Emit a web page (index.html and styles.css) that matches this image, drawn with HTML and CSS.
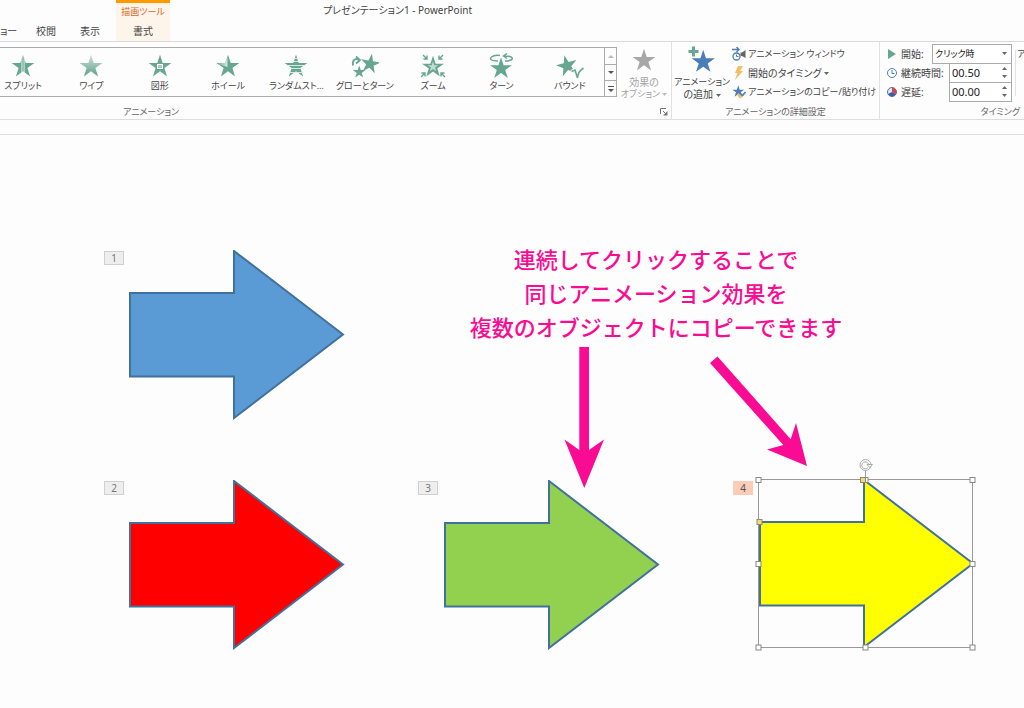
FILE: index.html
```html
<!DOCTYPE html>
<html lang="ja">
<head>
<meta charset="utf-8">
<title>プレゼンテーション1 - PowerPoint</title>
<link rel="stylesheet" href="styles.css">
</head>
<body>
<svg class="defs" aria-hidden="true">
  <defs>
    <polygon id="star" points="12,.7 14.7,9 23.4,9 16.4,14.1 19.1,22.4 12,17.3 4.9,22.4 7.6,14.1 .6,9 9.3,9"/>
    <polygon id="block-arrow" points="1,43 105,43 105,1 214,84.5 105,168 105,126.5 1,126.5"/>
    <linearGradient id="split"><stop offset=".2" stop-color="#67a690"/><stop offset=".4" stop-color="#67a690"/><stop offset=".41" stop-color="#c0dbd1"/><stop offset=".5" stop-color="#8dbcab"/><stop offset=".6" stop-color="#c0dbd1"/><stop offset=".61" stop-color="#67a690"/></linearGradient>
    <linearGradient id="wipe" x2="0" y2="1"><stop offset=".1" stop-color="#c4ddd4"/><stop offset=".9" stop-color="#67a690"/></linearGradient>
    <linearGradient id="wheel"><stop offset="0" stop-color="#67a690"/><stop offset="1" stop-color="#d5e8e1"/></linearGradient>
  </defs>
</svg>
<header class="titlebar">
  <nav class="tabs">
    <button class="tab tab-first">ョー</button>
    <button class="tab">校閲</button>
    <button class="tab">表示</button>
    <div class="context">
      <span class="context-name">描画ツール</span>
      <button class="tab">書式</button>
    </div>
  </nav>
  <h1 class="title">プレゼンテーション1 - PowerPoint</h1>
</header>

<div class="ribbon">
  <section class="group group-animation">
    <div class="group-body">
      <div class="gallery">
        <div class="effects">
          <button class="effect"><svg class="icon-l" viewBox="0 0 24 24"><use href="#star" fill="url(#split)"/></svg>スプリット</button>
          <button class="effect"><svg class="icon-l" viewBox="0 0 24 24"><use href="#star" fill="url(#wipe)"/></svg>ワイプ</button>
          <button class="effect"><svg class="icon-l" viewBox="0 0 24 24"><use href="#star"/><rect x="9.5" y="10.5" width="5" height="4" fill="#a9cdbf" stroke="#fff"/></svg>図形</button>
          <button class="effect"><svg class="icon-l" viewBox="0 0 24 24"><use href="#star"/><path d="M11.500 3V13L2.500 10.300.6 9H9.300Z" fill="url(#wheel)"/></svg>ホイール</button>
          <button class="effect"><svg class="icon-l" viewBox="0 0 24 24"><use href="#star"/><path d="M8 4.500h8M8 7.500h8M4 11.500h16M4 14.500h16M4 18.500h16" stroke="#e4f0ec" stroke-width=".9"/></svg>ランダムスト…</button>
          <button class="effect"><svg class="icon-xl" viewBox="0 0 28 26"><use href="#star" transform="translate(9 0) rotate(10 10 10) scale(.86)"/><use href="#star" transform="translate(1.500 12) scale(.56)"/><path d="M2 12.500C1 7 4 5 8 7M5 3.500L9 7.200 5 10.500" fill="none" stroke="#67a690" stroke-width="1.800"/></svg>グローとターン</button>
          <button class="effect"><svg class="icon-xl" viewBox="0 0 28 26"><use href="#star" transform="translate(2.500 2) scale(.96)"/><use href="#star" transform="translate(8.500 8) scale(.46)" fill="#c4ddd4"/><path d="M4 2l4 4M8 2.500V6H4.500M24 2l-4 4M20 2.500V6h3.500M2 24l4-4M2.500 20H6v3.500M26 24l-4-4M25.500 20H22v3.500" fill="none" stroke="#67a690" stroke-width="1.400"/></svg>ズーム</button>
          <button class="effect"><svg class="icon-xl" viewBox="0 0 28 26"><use href="#star" transform="translate(2.500 3.500) scale(.96)"/><path d="M11 8C4 8 2 6 4.500 4S10 2 13 2.500M18 8c8 0 9-3 5-4.500L17 3M20 .5L16.500 3 20 5.500" fill="none" stroke="#67a690" stroke-width="1.500"/></svg>ターン</button>
          <button class="effect"><svg class="icon-xl" viewBox="0 0 28 26"><use href="#star" transform="translate(0 1) rotate(-14 12 12) scale(.92)"/><path d="M15 18.500l4-1.500 2.500 7C22 19.500 24 17 27.500 15" fill="none" stroke="#fdfdfd" stroke-width="3"/><path d="M15.500 18.500l3.500-1.500 2.500 8C22 20 24 17 27.500 15" fill="none" stroke="#67a690" stroke-width="1.600"/></svg>バウンド</button>
        </div>
        <div class="scroller">
          <button class="scroll scroll-off" aria-label="上へ"><svg class="caret" viewBox="0 0 6 4"><path d="M0 4l3-3 3 3z"/></svg></button>
          <button class="scroll" aria-label="下へ"><svg class="caret" viewBox="0 0 6 4"><path d="M0 0h6L3 3z"/></svg></button>
          <button class="scroll" aria-label="その他"><svg class="more" viewBox="0 0 6 6"><path d="M0 0h6v1H0zM0 3h6L3 6z"/></svg></button>
        </div>
      </div>
      <button class="big big-options" disabled><svg class="icon-l" viewBox="0 0 24 24"><use href="#star"/></svg><span>効果の</span><span class="kana">オプション <svg class="drop" viewBox="0 0 5 3"><path d="M0 0h5L2.500 3z"/></svg></span></button>
    </div>
    <footer class="group-name"><span>アニメーション</span>
      <button class="launcher" aria-label="詳細"><svg viewBox="0 0 8 8"><path d="M.5 6V.5H6M3 3l3 3" fill="none" stroke="#777"/><path d="M7.500 3v4.500H3z" fill="#777"/></svg></button>
    </footer>
  </section>

  <section class="group group-advanced">
    <div class="group-body">
      <button class="big big-add"><svg class="icon-add" viewBox="0 0 28 28"><use href="#star" fill="#4a7ebb" transform="translate(3 3) scale(1.020)"/><path d="M5.500 0v11M0 5.500h11" stroke="#fdfdfd" stroke-width="5"/><path d="M5.500 .5v10M.5 5.500h10" stroke="#67a690" stroke-width="3"/></svg><span class="kana">アニメーション</span><span>の追加 <svg class="drop" viewBox="0 0 5 3"><path d="M0 0h5L2.500 3z"/></svg></span></button>
      <div class="commands">
        <button class="command"><svg class="icon-s" viewBox="0 0 14 14"><circle cx="4.500" cy="9.500" r="3.500" fill="#fff" stroke="#4a7ebb" stroke-width="1.300"/><path d="M4.500 7.500v2h2" fill="none" stroke="#4a7ebb"/><path d="M0 2.500h7M4.500 0L7 2.500 4.500 5" fill="none" stroke="#4a7ebb" stroke-width="1.400"/><path d="M8.500 5.500h1.500L13.500 3v8L10 9H8.500z" fill="#666"/></svg><span class="kana">アニメーション ウィンドウ</span></button>
        <button class="command"><svg class="icon-s" viewBox="0 0 14 14"><path d="M6 0h5L8 5h3L3 14l2.500-7H3z" fill="#f3bd62"/></svg><span>開始のタイミング <svg class="drop" viewBox="0 0 5 3"><path d="M0 0h5L2.500 3z"/></svg></span></button>
        <button class="command"><svg class="icon-s" viewBox="0 0 14 14"><use href="#star" fill="#4a7ebb" transform="scale(.52)"/><path d="M5 10l3 3.500 2.500-1.500L6.500 8z" fill="#f3bd62"/><path d="M7 7l3.500 3.500L13.500 7" fill="none" stroke="#4a7ebb" stroke-width="1.600"/></svg><span class="kana">アニメーションのコピー/貼り付け</span></button>
      </div>
    </div>
    <footer class="group-name"><span>アニメーションの詳細設定</span></footer>
  </section>

  <section class="group group-timing">
    <div class="group-body">
      <div class="timing">
        <div class="field">
          <svg class="icon-t" viewBox="0 0 12 12"><path d="M2 1l8 5-8 5z" fill="#67a690"/></svg>
          <label for="start">開始:</label>
          <div class="box box-wide"><select id="start"><option>クリック時</option></select><svg class="drop" viewBox="0 0 5 3"><path d="M0 0h5L2.500 3z"/></svg></div>
        </div>
        <div class="field">
          <svg class="icon-t" viewBox="0 0 12 12"><circle cx="6" cy="6" r="4.500" fill="#fff" stroke="#4a7ebb"/><path d="M6 3v3.500h2.500" fill="none" stroke="#4a7ebb"/></svg>
          <label for="duration">継続時間:</label>
          <div class="box"><input id="duration" value="00.50"><div class="spin"><button aria-label="増やす"><svg class="drop" viewBox="0 0 5 3"><path d="M0 3h5L2.500 0z"/></svg></button><button aria-label="減らす"><svg class="drop" viewBox="0 0 5 3"><path d="M0 0h5L2.500 3z"/></svg></button></div></div>
        </div>
        <div class="field">
          <svg class="icon-t" viewBox="0 0 12 12"><circle cx="6" cy="6" r="4.500" fill="#dfe8f5" stroke="#4a6fb0"/><path d="M6 6V1.500A4.500 4.500 0 0 1 10 8z" fill="#d9444c"/><path d="M2 8a4.500 4.500 0 0 0 8 0L6 6z" fill="#3d5f9f"/></svg>
          <label for="delay">遅延:</label>
          <div class="box"><input id="delay" value="00.00"><div class="spin"><button aria-label="増やす"><svg class="drop" viewBox="0 0 5 3"><path d="M0 3h5L2.500 0z"/></svg></button><button aria-label="減らす"><svg class="drop" viewBox="0 0 5 3"><path d="M0 0h5L2.500 3z"/></svg></button></div></div>
        </div>
      </div>
      <div class="reorder">ア</div>
    </div>
    <footer class="group-name"><span>タイミング</span></footer>
  </section>
</div>
<div class="gap-strip"></div>

<main class="slide">
  <span class="badge badge-1">1</span>
  <svg class="shape shape-1" viewBox="0 0 216 170"><use href="#block-arrow"/></svg>
  <span class="badge badge-2">2</span>
  <svg class="shape shape-2" viewBox="0 0 216 170"><use href="#block-arrow"/></svg>
  <span class="badge badge-3">3</span>
  <svg class="shape shape-3" viewBox="0 0 216 170"><use href="#block-arrow"/></svg>
  <span class="badge badge-4">4</span>
  <svg class="shape shape-4" viewBox="0 0 216 170"><use href="#block-arrow"/></svg>
  <svg class="selection" viewBox="0 0 224 196">
    <g fill="none" stroke="#999">
      <rect x="4.500" y="23.500" width="214" height="168"/>
      <path d="M111.500 14v10"/>
      <circle cx="111.500" cy="9" r="5.500" fill="#fff" stroke="#aaa"/>
      <path d="M114 11.500A3.500 3.500 0 1 1 114.500 8" stroke="#aaa"/>
      <path d="M113 8.500h5.500l-2.700 3z" fill="#fff" stroke="#aaa"/>
    </g>
    <g fill="#fff" stroke="#888">
      <rect x="2" y="21.500" width="5" height="5"/><rect x="109" y="21.500" width="5" height="5"/><rect x="216" y="21.500" width="5" height="5"/>
      <rect x="2" y="105.500" width="5" height="5"/><rect x="216" y="105.500" width="5" height="5"/>
      <rect x="2" y="189" width="5" height="5"/><rect x="109" y="189" width="5" height="5"/><rect x="216" y="189" width="5" height="5"/>
      <rect x="106.500" y="21.500" width="5" height="5" fill="#fbd968"/><rect x="3" y="63.500" width="5" height="5" fill="#fbd968"/>
    </g>
  </svg>
  <p class="note">連続してクリックすることで<br>同じアニメーション効果を<br>複数のオブジェクトにコピーできます</p>
  <svg class="pointers" viewBox="0 0 246 144"><path d="M15.300 0H25V103L40 92.500 20.300 141 .5 92.500 15.300 103ZM153.500 9.500L226.700 92.300 232 76 243 119 203 102.500 219.300 98 146 16Z" fill="#f90b93"/></svg>
</main>
</body>
</html>
```

FILE: styles.css
```css
* { box-sizing: border-box; }

body {
  margin: 0;
  min-height: 100vh;
  display: flex;
  flex-direction: column;
  overflow: hidden;
  background: #fdfdfd;
  color: #444;
  font: 10px/14px "Noto Sans", "Noto Sans CJK JP", sans-serif;
  font-feature-settings: "palt";
}

button, input, select {
  margin: 0;
  padding: 0;
  border: 0;
  background: none;
  color: inherit;
  font: inherit;
  font-feature-settings: inherit;
}

svg { display: block; flex: none; }
.defs { position: absolute; width: 0; height: 0; }
.kana { font-size: 9px; }

/* Title bar and tabs */
.titlebar {
  display: flex;
  align-items: stretch;
  height: 42px;
  border-bottom: 1px solid #d9d9d9;
}
.tabs { display: flex; align-items: flex-end; }
.tab { width: 44px; height: 21px; white-space: nowrap; }
.tab-first { width: 24px; text-align: left; }
.context {
  display: flex;
  flex-direction: column;
  align-items: center;
  justify-content: space-between;
  width: 54px;
  height: 41px;
  margin-left: 4px;
  border-top: 3px solid #f90;
  background: #fef5ea;
}
.context-name { padding-top: 2px; color: #d4672a; font-size: 9px; }
.title { margin: 3px 0 0 153px; font-size: 10px; font-weight: 400; }

/* Ribbon */
.ribbon { display: flex; height: 78px; border-bottom: 1px solid #ddd; }
.gap-strip { height: 15px; border-bottom: 1px solid #ddd; }
.group { display: flex; flex-direction: column; padding-top: 2px; overflow: hidden; }
.group-body { display: flex; height: 61px; }
.group-name { display: flex; justify-content: center; color: #666; font-size: 9px; }
.group-animation { flex: 1; min-width: 0; }
.group-advanced { width: 208px; }
.group-timing { width: 144px; }
.group-animation, .group-advanced { border-right: 1px solid #e1e1e1; }
.group-animation .group-name { padding-right: 3px; }
.group-animation .group-name span { margin-left: 123px; margin-right: auto; }
.group-timing .group-name { justify-content: flex-end; padding-right: 4px; }

.gallery {
  flex: 1;
  min-width: 0;
  display: flex;
  height: 50px;
  margin: 3px 0 0 -12px;
  border: 1px solid #ababab;
}
.effects { flex: 1; display: grid; grid-template-columns: repeat(9, 1fr); }
.effect {
  display: flex;
  flex-direction: column;
  align-items: center;
  justify-content: flex-end;
  padding-bottom: 3px;
  font-size: 9px;
  white-space: nowrap;
  fill: #67a690;
}
.icon-l { width: 24px; height: 24px; margin-bottom: 1px; }
.icon-xl { width: 28px; height: 26px; }
.scroller { display: grid; grid-template-rows: repeat(3, 1fr); width: 12px; border-left: 1px solid #ababab; }
.scroll { display: flex; align-items: center; justify-content: center; fill: #555; }
.scroll + .scroll { border-top: 1px solid #ababab; }
.scroll-off { fill: #bbb; }
.caret { width: 6px; height: 4px; }
.more { width: 6px; height: 6px; }

.big {
  display: flex;
  flex-direction: column;
  align-items: center;
  line-height: 12px;
  white-space: nowrap;
}
.big-options { width: 54px; padding-top: 4px; color: #a3a3a3; fill: #a8a8a8; }
.big-options .icon-l { margin-bottom: 4px; }
.big-add { width: 60px; }
.icon-add { width: 28px; height: 28px; margin: 2px 0; }
.drop { display: inline-block; width: 5px; height: 3px; vertical-align: middle; fill: #666; }
.big-options .drop { fill: #bbb; }
.launcher svg { width: 8px; height: 8px; }

.commands, .timing { display: flex; flex-direction: column; }
.command {
  display: flex;
  align-items: center;
  gap: 2px;
  height: 19px;
  white-space: nowrap;
}
.icon-s { width: 14px; height: 14px; }

.timing { flex: none; width: 132px; }
.field { display: flex; align-items: center; height: 19px; padding-left: 6px; }
.icon-t { width: 12px; height: 12px; margin-right: 3px; }
.field label { margin-right: auto; white-space: nowrap; }
.box {
  flex: none;
  display: flex;
  align-items: center;
  justify-content: space-between;
  width: 63px;
  height: 20px;
  padding: 0 4px 0 2px;
  border: 1px solid #ababab;
  background: #fff;
  color: #222;
}
.box-wide { width: 80px; }
.box select { appearance: none; flex: 1; min-width: 0; font-size: 9px; }
.box input { width: 36px; font-size: 11px; }
.spin { display: flex; flex-direction: column; gap: 5px; }
.spin button { display: flex; }
.reorder { flex: none; height: 46px; margin: 6px 0 0 3px; padding-left: 1px; border-left: 1px solid #e1e1e1; font-size: 9px; line-height: 8px; }

/* Slide: shapes sit freely on the canvas */
.slide { position: relative; flex: 1; }
.shape { position: absolute; width: 216px; height: 170px; stroke: #41719c; stroke-width: 2; }
.shape-1 { left: 129px; top: 115px; fill: #5b9bd5; }
.shape-2 { left: 129px; top: 345px; fill: #f00; }
.shape-3 { left: 444px; top: 345px; fill: #92d050; }
.shape-4 { left: 759px; top: 344px; fill: #ff0; }
.badge {
  position: absolute;
  width: 20px;
  height: 14px;
  border: 1px solid #d0d0d0;
  background: #eee;
  color: #777;
  line-height: 12px;
  text-align: center;
}
.badge-1 { left: 104px; top: 116px; }
.badge-2 { left: 104px; top: 346px; }
.badge-3 { left: 418px; top: 346px; }
.badge-4 { left: 733px; top: 346px; border-color: #fbcdb8; background: #fbcdb8; color: #555; }
.selection { position: absolute; left: 754px; top: 321px; width: 224px; height: 196px; }
.note {
  position: absolute;
  left: 456px;
  top: 106px;
  width: 400px;
  margin: 0;
  color: #f90b93;
  font: 500 22px/34px "Noto Sans CJK JP", sans-serif;
  font-feature-settings: normal;
  text-align: center;
  white-space: nowrap;
}
.pointers { position: absolute; left: 564px; top: 212px; width: 246px; height: 144px; }
```
